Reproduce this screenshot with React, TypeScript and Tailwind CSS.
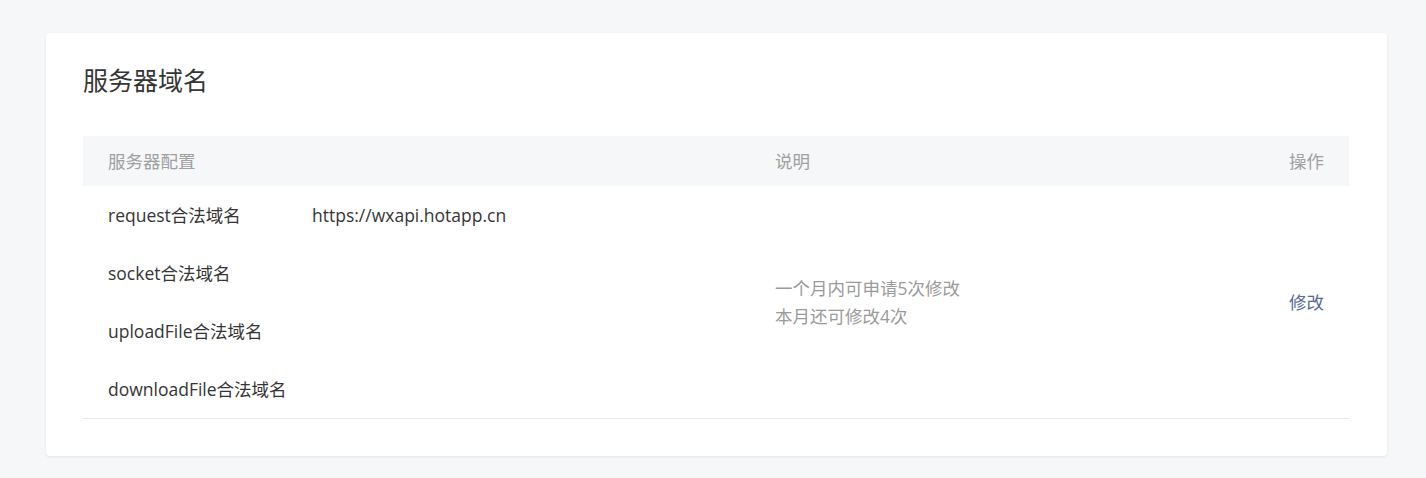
const rows = [
  { label: 'request合法域名', value: 'https://wxapi.hotapp.cn' },
  { label: 'socket合法域名', value: '' },
  { label: 'uploadFile合法域名', value: '' },
  { label: 'downloadFile合法域名', value: '' },
]

export default function App() {
  return (
    <div
      className="min-h-[478px] bg-[#f6f7f9] pt-[33px] pl-[46px] pr-[39px]"
      style={{ fontFamily: '"Open Sans", "Noto Sans CJK SC", sans-serif' }}
    >
      <div className="w-[1341px] rounded-[4px] bg-white px-[37px] pt-[27px] pb-[37px] shadow-[0_1px_3px_rgba(0,0,0,0.08)]">
        <h2 className="text-[25px] leading-[40px] text-[#353535]">服务器域名</h2>

        <div className="mt-[36px] w-[1266px]">
          {/* header */}
          <div className="grid h-[50px] grid-cols-[667px_1fr_auto] items-center bg-[#f6f7f9] text-[17.5px] text-[#a0a0a0]">
            <div className="pl-[25px]">服务器配置</div>
            <div className="pl-[25px]">说明</div>
            <div className="pr-[25px] text-right">操作</div>
          </div>

          {/* body */}
          <div className="grid grid-cols-[667px_1fr_auto] items-center border-b border-[#e7e7eb] text-[17.5px]">
            <div className="pl-[25px] text-[#353535]">
              {rows.map((r) => (
                <div key={r.label} className="flex h-[58px] items-center">
                  <span className="w-[204px]">{r.label}</span>
                  <span>{r.value}</span>
                </div>
              ))}
            </div>
            <div className="pl-[25px] leading-[28px] text-[#9a9a9a]">
              <p>一个月内可申请5次修改</p>
              <p>本月还可修改4次</p>
            </div>
            <div className="pr-[25px] text-right">
              <a className="text-[#576b95]">修改</a>
            </div>
          </div>
        </div>
      </div>
    </div>
  )
}
